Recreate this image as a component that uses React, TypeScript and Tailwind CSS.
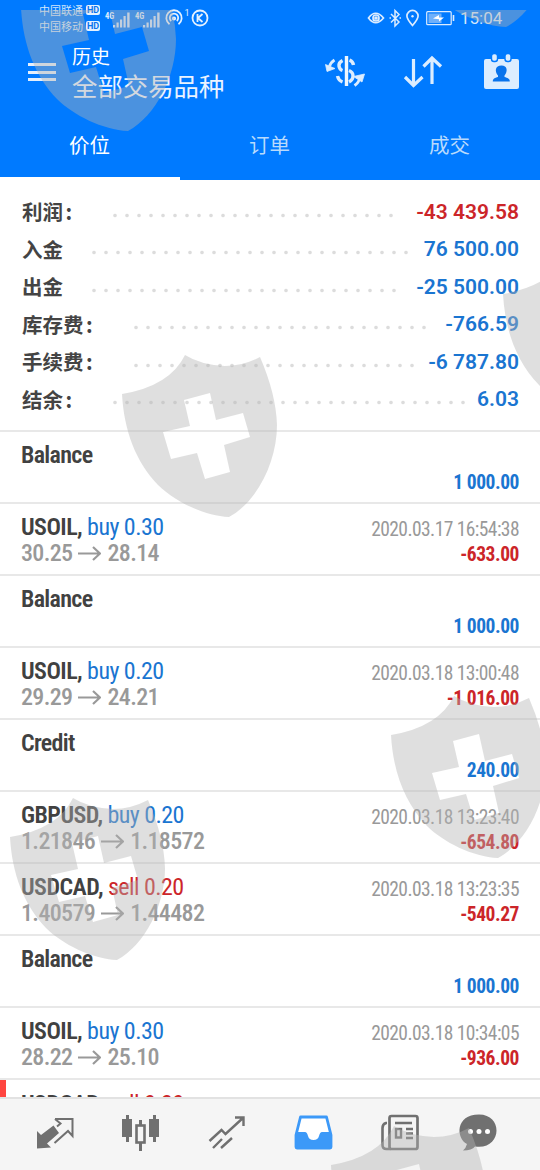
import React from "react";

const cjk = "font-['Noto_Sans_CJK_SC',sans-serif]";
const condensed = "font-['Roboto_Condensed','Roboto',sans-serif]";

type Summary = { label: string; colon?: boolean; value: string; red?: boolean; lead: string; dots: string };

const summary: Summary[] = [
  { label: "利润", colon: true, value: "-43 439.58", red: true, lead: "w-[87px]", dots: "w-[288px]" },
  { label: "入金", value: "76 500.00", lead: "w-[66px]", dots: "w-[324px]" },
  { label: "出金", value: "-25 500.00", lead: "w-[66px]", dots: "w-[312px]" },
  { label: "库存费", colon: true, value: "-766.59", lead: "w-[108px]", dots: "w-[300px]" },
  { label: "手续费", colon: true, value: "-6 787.80", lead: "w-[108px]", dots: "w-[288px]" },
  { label: "结余", colon: true, value: "6.03", lead: "w-[87px]", dots: "w-[360px]" },
];

type Deal = {
  name: string;
  side?: "buy" | "sell";
  volume?: string;
  open?: string;
  close?: string;
  time?: string;
  amount: string;
};

const deals: Deal[] = [
  { name: "Balance", amount: "1 000.00" },
  { name: "USOIL", side: "buy", volume: "0.30", open: "30.25", close: "28.14", time: "2020.03.17 16:54:38", amount: "-633.00" },
  { name: "Balance", amount: "1 000.00" },
  { name: "USOIL", side: "buy", volume: "0.20", open: "29.29", close: "24.21", time: "2020.03.18 13:00:48", amount: "-1 016.00" },
  { name: "Credit", amount: "240.00" },
  { name: "GBPUSD", side: "buy", volume: "0.20", open: "1.21846", close: "1.18572", time: "2020.03.18 13:23:40", amount: "-654.80" },
  { name: "USDCAD", side: "sell", volume: "0.20", open: "1.40579", close: "1.44482", time: "2020.03.18 13:23:35", amount: "-540.27" },
  { name: "Balance", amount: "1 000.00" },
  { name: "USOIL", side: "buy", volume: "0.30", open: "28.22", close: "25.10", time: "2020.03.18 10:34:05", amount: "-936.00" },
];

function Signal() {
  return (
    <svg width="27" height="19" viewBox="0 0 27 19">
      <text x="0" y="9" fontSize="8.500" fontWeight="700" fontFamily="Roboto Condensed, Roboto, sans-serif" fill="#dcecff">4G</text>
      <g fill="#cfe3fb">
        <rect x="8" y="15" width="2.2" height="2.5" />
        <rect x="11.5" y="12.500" width="2.2" height="5" />
        <rect x="15" y="9.500" width="2.2" height="8" />
        <rect x="18.5" y="6" width="2.2" height="11.500" />
        <rect x="22.2" y="2.500" width="2.4" height="15" />
      </g>
    </svg>
  );
}

function Carrier({ name }: { name: string }) {
  return (
    <div className="flex items-center gap-[3px]">
      <span className="w-[44px] text-[11px] leading-[16px]">{name}</span>
      <span className="flex h-[10px] w-[14px] items-center justify-center rounded-[2px] bg-[#e4f1ff] text-[9px] leading-none font-bold text-[#0a74ee] font-['Roboto']">HD</span>
    </div>
  );
}

function StatusBar() {
  return (
    <div className="flex h-[36px] items-center pl-[39px] pr-[38px] text-[#d3e6fb]">
      <div className={`flex flex-col ${cjk}`}>
        <Carrier name="中国联通" />
        <Carrier name="中国移动" />
      </div>
      <div className="ml-[5px] flex gap-[3px] pt-[2px]">
        <Signal />
        <Signal />
      </div>
      <svg className="ml-[3px]" width="46" height="20" viewBox="166 8 46 20" fill="none" stroke="#e4f1ff" strokeWidth="1.8">
        <path d="M170.5 24.2A7.7 7.7 0 1 1 179.500 24.2" />
        <path d="M172.200 21A4.200 4.200 0 1 1 177.800 21" />
        <circle cx="175" cy="18.500" r="1.200" />
        <circle cx="201" cy="18" r="7.500" />
        <path d="M198.500 14v8M203.500 14l-4.500 4 4.500 4" />
        <text x="185.500" y="16" fontSize="9" stroke="none" fill="#e4f1ff" fontFamily="Roboto, sans-serif">1</text>
      </svg>
      <svg className="ml-auto" width="92" height="20" viewBox="366 8 92 20" fill="none" stroke="#dcecff" strokeWidth="1.700">
        <path d="M368.500 18q7-9.500 15 0q-8 9.500-15 0Z" />
        <circle cx="376" cy="18" r="3" />
        <circle cx="376" cy="18" r="1" fill="#dcecff" />
        <path d="M391 14l8 8-4 4V10.500l4 4-8 8M389.500 18h1.500M399.500 18h1.500" strokeWidth="1.500" />
        <path d="M412.500 25.500q-5.600-6.500-5.600-9.500a5.600 5.600 0 0 1 11.200 0q0 3-5.600 9.500Z" />
        <circle cx="412.500" cy="16.300" r="1.200" fill="#dcecff" stroke="none" />
        <rect x="426.700" y="11.700" width="24.500" height="13" rx="1" strokeWidth="1.200" />
        <rect x="428.500" y="13.500" width="13" height="9.500" fill="#6fb0fa" stroke="none" />
        <path d="M453.500 15v6" strokeWidth="1.600" />
        <path d="M433 18.500l6-3.500v2.500h5l-5 4v-2.200z" fill="#fff" stroke="none" />
      </svg>
      <span className="ml-[2px] w-[42px] text-[17px] leading-[20px] font-['Roboto']">15:04</span>
    </div>
  );
}

function Header() {
  return (
    <header className={`flex h-[180px] flex-col bg-[#007aff] ${cjk}`}>
      <StatusBar />
      <div className="flex h-[75px] pl-7">
        <div className="flex w-[44px] flex-col gap-[4.500px] pt-[27px]">
          <i className="h-[3px] w-[28px] bg-[#e4effc]" />
          <i className="h-[3px] w-[28px] bg-[#e4effc]" />
          <i className="h-[3px] w-[28px] bg-[#e4effc]" />
        </div>
        <div className="flex flex-col text-white">
          <span className="mt-[6px] text-[19px] leading-[28px]">历史</span>
          <span className="text-[25.400px] leading-[31px] text-[#eaf3ff]">全部交易品种</span>
        </div>
        <svg className="ml-auto mr-[20px] mt-[16px]" width="196" height="40" viewBox="324 52 196 40" fill="none" stroke="#dcedff" strokeWidth="3.200">
          <path d="M346.500 56v30" strokeWidth="3.400" stroke="#eef7ff" />
          <path d="M342.500 60.500q-4 2-3.500 5.500t3.500 4.500M337.500 76q1 4.500 5 6M349.500 60q3.500 1.500 4 5M349 70.500q4 1.500 4 5.500t-4 6" strokeWidth="3.400" />
          <path d="M334.500 60q-4 2.500-5 6.500M354.500 85.500q4.500-3 5.500-8" strokeWidth="2.800" />
          <path d="M325.500 64.500l9.500 4-8 3zM353.500 76.500l11-2.500-2.500 8z" fill="#dcedff" strokeWidth="0.800" />
          <path d="M413.500 59v27M405 77l8.500 8.500 9-8.500M432 84V58M423.500 66.500l8.500-8.500 9 8.500" />
          <path d="M486 59h31q2 0 2 2v26q0 2-2 2h-31q-2 0-2-2V61q0-2 2-2z" fill="#dcedff" stroke="none" />
          <rect x="491.500" y="53.500" width="6" height="8" rx="2.500" fill="#dcedff" stroke="#007aff" strokeWidth="1.400" />
          <rect x="505" y="53.500" width="6" height="8" rx="2.500" fill="#dcedff" stroke="#007aff" strokeWidth="1.400" />
          <path d="M501.500 65.500c6 0 6.500 6 3 10v1.500c3 1 5.300 1.500 5.300 4.500h-17c0-3 2-3.500 5.200-4.500v-1.500c-3.500-4-3-10 3.500-10z" fill="#0873ec" stroke="none" />
        </svg>
      </div>
      <nav className="grid h-[69px] grid-cols-3 text-center text-[20.500px] leading-[66px] text-[#b9dafc]">
        <span className="border-b-[3px] border-white pr-px text-white">价位</span>
        <span className="pr-px">订单</span>
        <span className="pr-px">成交</span>
      </nav>
    </header>
  );
}

function SummaryRow({ row }: { row: Summary }) {
  return (
    <div className="flex h-[37.500px] items-center pl-[22px] pr-[21px]">
      <span className={`${row.lead} pb-[1px] text-[20.500px] leading-[30px] font-bold text-[#444] ${cjk}`}>
        {row.label}
        {row.colon && <span className="ml-[2.500px]">:</span>}
      </span>
      <span className={`${row.dots} mt-[7px] h-[5px] bg-[radial-gradient(circle,#dcdcdc_1.300px,transparent_2.200px)] bg-[size:12px_5px]`} />
      <span className={`ml-auto whitespace-nowrap text-[21px] leading-[28px] font-semibold font-['Roboto'] ${row.red ? "text-[#cc2529]" : "text-[#1a75d1]"}`}>
        {row.value}
      </span>
    </div>
  );
}

function DealRow({ deal }: { deal: Deal }) {
  return (
    <div className={`flex h-[72px] justify-between border-b-2 border-[#e8e8e8] pl-[21px] pr-[21px] pt-[9px] whitespace-nowrap ${condensed}`}>
      <div className="flex flex-col">
        <div className="text-[24px] leading-[28px] tracking-[-0.550px]">
          <span className={`font-semibold text-[#414141] ${deal.side ? "" : "tracking-[-0.700px]"}`}>{deal.name}{deal.side && ","}</span>
          {deal.side && (
            <span className={deal.side === "buy" ? "text-[#1a75d1]" : "text-[#cc2529]"}> {deal.side} {deal.volume}</span>
          )}
        </div>
        {deal.open && (
          <div className="flex items-center text-[24px] leading-[25px] font-medium tracking-[-0.650px] text-[#999]">
            {deal.open}
            <svg className="mr-[6px] ml-[6px]" width="23" height="16" viewBox="0 0 23 16" fill="none" stroke="#999" strokeWidth="2.200">
              <path d="M0 7.500h22M15 1l7 6.500-7 6.500" />
            </svg>
            {deal.close}
          </div>
        )}
      </div>
      <div className="flex flex-col items-end">
        <span className="mt-[4px] h-[25px] text-[19.500px] leading-[26px] tracking-[-0.570px] text-[#999]">{deal.time}</span>
        <span className={`text-[19.500px] leading-[25px] font-bold tracking-[-0.450px] ${deal.amount.startsWith("-") ? "text-[#cc2529]" : "text-[#1a75d1]"}`}>{deal.amount}</span>
      </div>
    </div>
  );
}

function TabBar() {
  return (
    <footer className="flex h-[73px] border-t-[2px] border-[#e2e2e2] bg-[#f5f5f5]">
      <svg width="540" height="71" viewBox="0 1099 540 71" fill="none" stroke="#707070" strokeWidth="2">
        <path d="M37 1148.500V1131l4 4 12.500-9.500 5.500 7.500-12 10.500 4 4z" fill="#707070" stroke="none" />
        <path d="M55 1119h17.500v17l-4.500-5-13.500 12M55 1119l5.500 4.500-3.500 3" />
        <g fill="#707070" stroke="none">
          <path d="M122 1119h10v18h-10zM126 1115h3v27h-3zM149 1119h10v18h-10zM153 1115h3v27h-3zM139 1120h3v6h-3zM139 1142h3v9h-3z" />
        </g>
        <rect x="136.500" y="1125.500" width="8" height="17" strokeWidth="2.600" />
        <path d="M209.500 1141l12-11 4 4 18-16.500M235 1117.500h8.500v8.500M213 1148l9-9M221 1148l11-10" strokeWidth="2.400" />
        <path d="M300.500 1117h26l4.500 18v12q0 1-1 1h-33q-1 0-1-1v-12z" stroke="#3c99f8" strokeWidth="2.800" fill="#fff" strokeLinejoin="round" />
        <path d="M296 1132h9q2 0 3 4 1 4 5.500 4t5.500-4q1-4 3-4h9v15q0 1-1 1h-33q-1 0-1-1z" fill="#3c99f8" stroke="none" />
        <rect x="389.500" y="1116" width="28" height="33" rx="2" strokeWidth="2.700" />
        <path d="M387 1123h-1q-3.500 1-3.500 5v17q0 4 4 4h4" strokeWidth="2.600" />
        <path d="M395 1123h17M406 1129h7M406 1133.500h7M406 1138h7" strokeWidth="2.500" />
        <rect x="396" y="1129" width="5" height="8.500" strokeWidth="2.400" />
        <path d="M479 1114.500c-24 0-23 24-12 29.500q-1 4-4 6.500 9 0 12-4c27 4 29-32 4-32z" fill="#707070" stroke="none" />
        <g fill="#fff" stroke="none">
          <circle cx="470.500" cy="1131.500" r="2.500" />
          <circle cx="479" cy="1131.500" r="2.500" />
          <circle cx="487.500" cy="1131.500" r="2.500" />
        </g>
      </svg>
    </footer>
  );
}

const shieldOffsets = ["-101 -386", "277 -490", "381 -100", "0 0", "269 341", "-112 443", "209 771"];

function Watermark() {
  return (
    <svg className="pointer-events-none absolute left-0 top-[10px]" width="540" height="1160" viewBox="0 10 540 1160" fill="rgba(178,178,178,0.42)">
      {shieldOffsets.map((o) => (
        <path
          key={o}
          transform={`translate(${o})`}
          fillRule="evenodd"
          d="M185 355Q201 365 225 366Q243 366 260 357Q276 394 277 425C277 462 257 502 229 517C204 516 174 501 158 485C136 462 124 431 122 394Q170 386 185 355ZM184 400L210 393L216 420L243 413L250 437L224 445L230 472L205 479L197 453L171 459L163 432L190 426Z"
        />
      ))}
    </svg>
  );
}

export default function App() {
  return (
    <div className="relative flex h-[1170px] w-[540px] flex-col overflow-hidden bg-white">
      <Header />
      <section className="flex h-[252px] flex-col border-b-2 border-[#e8e8e8] pt-[13px]">
        {summary.map((row) => (
          <SummaryRow key={row.label} row={row} />
        ))}
      </section>
      <main className="h-[665px] overflow-hidden">
        {deals.map((deal, i) => (
          <DealRow key={i} deal={deal} />
        ))}
        <div className={`flex h-[40px] text-[24px] leading-[28px] tracking-[-0.550px] ${condensed}`}>
          <i className="h-[18px] w-[6px] bg-[#ff4540]" />
          <div className="whitespace-nowrap pl-[15px] pt-[10px]">
            <span className="font-semibold text-[#414141]">USDCAD,</span>
            <span className="text-[#cc2529]"> sell 0.20</span>
          </div>
        </div>
      </main>
      <TabBar />
      <Watermark />
    </div>
  );
}
